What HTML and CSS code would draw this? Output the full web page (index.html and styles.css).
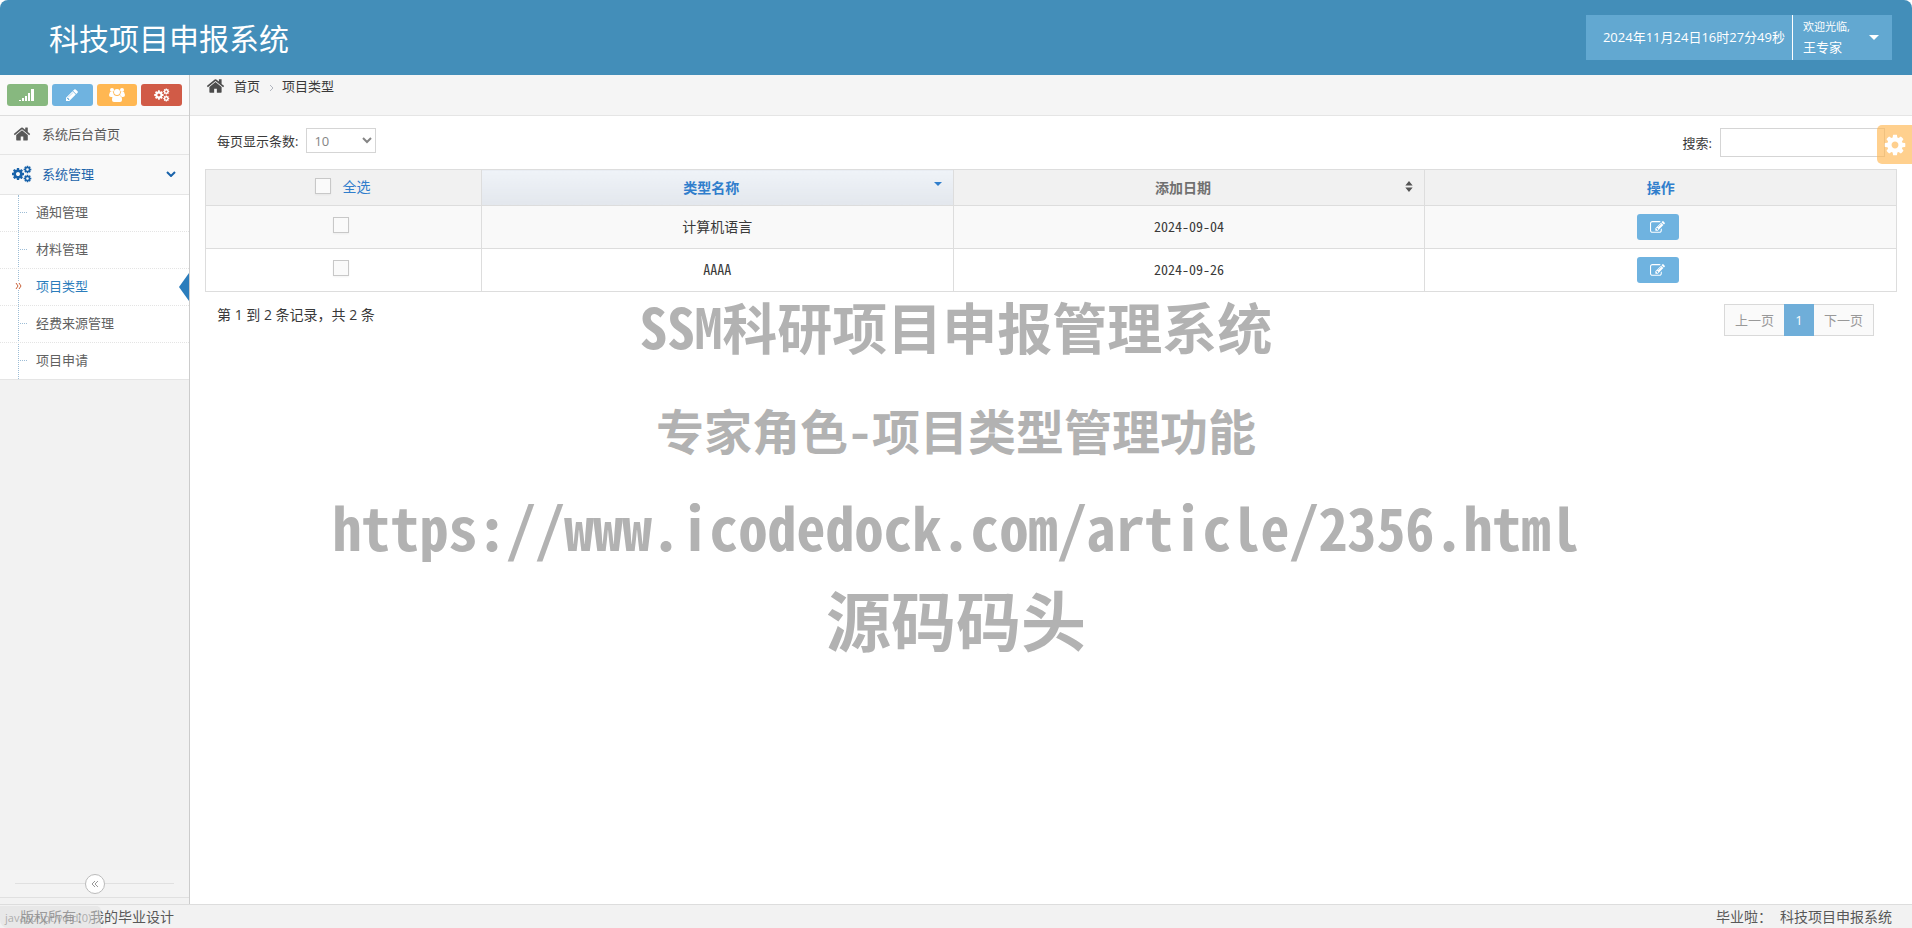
FILE: index.html
```html
<!DOCTYPE html>
<html lang="zh-CN">
<head>
<meta charset="utf-8">
<title>科技项目申报系统</title>
<link rel="stylesheet" href="styles.css">
</head>
<body>
<svg class="defs" aria-hidden="true">
  <symbol id="home" viewBox="0 0 1792 1792"><path d="M1472 992v480q0 26-19 45t-45 19h-384v-384h-256v384h-384q-26 0-45-19t-19-45v-480q0-1 .5-3t.5-3l575-474 575 474q1 2 1 6zm223-69l-62 74q-8 9-21 11h-3q-13 0-21-7l-692-577-692 577q-12 8-24 7-13-2-21-11l-62-74q-8-10-7-23.500t11-21.500l719-599q32-26 76-26t76 26l244 204v-195q0-14 9-23t23-9h192q14 0 23 9t9 23v408l219 182q10 8 11 21.500t-7 23.500z"/></symbol>
  <symbol id="cog" viewBox="0 0 1792 1792"><path d="M1152 896q0-106-75-181t-181-75-181 75-75 181 75 181 181 75 181-75 75-181zm512-109v222q0 12-8 23t-20 13l-185 28q-19 54-39 91 35 50 107 138 10 12 10 25t-9 23q-27 37-99 108t-94 71q-12 0-26-9l-138-108q-44 23-91 38-16 136-29 186-7 28-36 28h-222q-14 0-24.500-8.500t-11.500-21.500l-28-184q-49-16-90-37l-141 107q-10 9-25 9-14 0-25-11-126-114-165-168-7-10-7-23 0-12 8-23 15-21 51-66.500t54-70.500q-27-50-41-99l-183-27q-13-2-21-12.500t-8-23.500v-222q0-12 8-23t19-13l186-28q14-46 39-92-40-57-107-138-10-12-10-24 0-10 9-23 26-36 98.500-107.500t94.500-71.500q13 0 26 10l138 107q44-23 91-38 16-136 29-186 7-28 36-28h222q14 0 24.500 8.500t11.500 21.500l28 184q49 16 90 37l142-107q9-9 24-9 13 0 25 10 129 119 165 170 7 8 7 22 0 12-8 23-15 21-51 66.500t-54 70.500q26 50 41 98l183 28q13 2 21 12.500t8 23.500z"/></symbol>
  <symbol id="cogs" viewBox="0 0 20 18"><use href="#cog" x="-1" y="2" width="14" height="14"/><use href="#cog" x="11" y="0" width="9" height="9"/><use href="#cog" x="11" y="9" width="9" height="9"/></symbol>
  <symbol id="pencil" viewBox="0 0 1792 1792"><path d="M491 1536l91-91-235-235-91 91v107h128v128h107zm523-928q0-22-22-22-10 0-17 7l-542 542q-7 7-7 17 0 22 22 22 10 0 17-7l542-542q7-7 7-17zm-54-192l416 416-832 832h-416v-416zm683 96q0 53-37 90l-166 166-416-416 166-165q36-38 90-38 53 0 91 38l235 234q37 39 37 91z"/></symbol>
  <symbol id="edit" viewBox="0 0 1792 1792"><path d="M888 1184l116-116-152-152-116 116v56h96v96h56zm440-720q-16-16-33 1l-350 350q-17 17-1 33t33-1l350-350q17-17 1-33zm80 594v190q0 119-84.500 203.500t-203.500 84.500h-832q-119 0-203.500-84.500t-84.500-203.500v-832q0-119 84.500-203.500t203.500-84.500h832q63 0 117 25 15 7 18 23 3 17-9 29l-49 49q-14 14-32 8-23-6-45-6h-832q-66 0-113 47t-47 113v832q0 66 47 113t113 47h832q66 0 113-47t47-113v-126q0-13 9-22l64-64q15-15 35-7t20 29zm-96-738l288 288-672 672h-288v-288zm444 132l-92 92-288-288 92-92q28-28 68-28t68 28l152 152q28 28 28 68t-28 68z"/></symbol>
  <symbol id="signal" viewBox="0 0 16 14"><path d="M0 12h2v1H0zM3 10h2v3H3zM6 8h2v5H6zM9 5h2v8H9zM12 1h3v12h-3z"/></symbol>
  <symbol id="users" viewBox="0 0 16 14"><circle cx="3" cy="2" r="2"/><circle cx="13" cy="2" r="2"/><circle cx="8" cy="4" r="3"/><path d="M1 4h3l1 3-1 2H2Q0 9 0 7zM15 4h-3l-1 3 1 2h2q2 0 2-2zM5 7q3 2 6 0 2 1 2 5 0 2-2 2H5q-2 0-2-2 0-4 2-5z"/></symbol>
  <symbol id="sort" viewBox="0 0 8 12"><path d="M0 5l4-5 4 5zM0 7h8l-4 5z"/></symbol>
</svg>

<header class="navbar">
  <h1 class="brand">科技项目申报系统</h1>
  <div class="account">
    <time class="clock">2024年11月24日16时27分49秒</time>
    <button class="user" type="button">
      <span class="user-text"><small class="welcome">欢迎光临,</small><span>王专家</span></span>
      <span class="caret"></span>
    </button>
  </div>
</header>

<div class="body">
  <aside class="sidebar">
    <div class="shortcuts">
      <button class="shortcut green" type="button" aria-label="统计"><svg class="ic-short"><use href="#signal"/></svg></button>
      <button class="shortcut blue" type="button" aria-label="编辑"><svg class="ic-short"><use href="#pencil"/></svg></button>
      <button class="shortcut orange" type="button" aria-label="用户"><svg class="ic-short"><use href="#users"/></svg></button>
      <button class="shortcut red" type="button" aria-label="设置"><svg class="ic-short"><use href="#cogs"/></svg></button>
    </div>
    <nav class="menu">
      <a class="item" href="#"><svg class="ic-menu"><use href="#home"/></svg>系统后台首页</a>
      <a class="item open" href="#"><svg class="ic-menu"><use href="#cogs"/></svg>系统管理
        <svg class="chev" viewBox="0 0 10 6"><path d="M1 1l4 4 4-4"/></svg></a>
      <div class="submenu">
        <a class="sub" href="#">通知管理</a>
        <a class="sub" href="#">材料管理</a>
        <a class="sub active" href="#"><svg class="mark" viewBox="0 0 7 8"><path d="M1 1l2 3-2 3M4 1l2 3-2 3"/></svg>项目类型</a>
        <a class="sub" href="#">经费来源管理</a>
        <a class="sub" href="#">项目申请</a>
      </div>
    </nav>
    <div class="collapse">
      <button class="collapse-btn" type="button" aria-label="收起"><svg class="ic-collapse" viewBox="0 0 8 8"><path d="M4 1L1 4l3 3M7 1L4 4l3 3"/></svg></button>
    </div>
  </aside>

  <main class="main">
    <nav class="crumbs">
      <svg class="ic-crumb"><use href="#home"/></svg>
      <a class="crumb" href="#">首页</a>
      <svg class="sep" viewBox="0 0 5 8"><path d="M1 1l3 3-3 3"/></svg>
      <span>项目类型</span>
    </nav>
    <div class="content">
      <div class="tools">
        <label class="tool">每页显示条数:
          <select class="length"><option>10</option><option>25</option></select></label>
        <label class="tool">搜索: <input class="search" type="text"></label>
      </div>
      <table class="grid">
        <thead>
          <tr>
            <th class="pick"><label class="all"><input class="check" type="checkbox">全选</label></th>
            <th class="sortable sorted">类型名称<span class="sort-down"></span></th>
            <th class="sortable plain">添加日期<svg class="sort-both"><use href="#sort"/></svg></th>
            <th>操作</th>
          </tr>
        </thead>
        <tbody>
          <tr>
            <td class="control"><input class="check" type="checkbox" aria-label="选择"></td>
            <td>计算机语言</td>
            <td>2024-09-04</td>
            <td class="control"><button class="edit" type="button" aria-label="编辑"><svg class="ic-edit"><use href="#edit"/></svg></button></td>
          </tr>
          <tr>
            <td class="control"><input class="check" type="checkbox" aria-label="选择"></td>
            <td>AAAA</td>
            <td>2024-09-26</td>
            <td class="control"><button class="edit" type="button" aria-label="编辑"><svg class="ic-edit"><use href="#edit"/></svg></button></td>
          </tr>
        </tbody>
      </table>
      <div class="foot">
        <span>第 1 到 2 条记录，共 2 条</span>
        <div class="pages">
          <button class="page" type="button">上一页</button>
          <button class="page current" type="button">1</button>
          <button class="page" type="button">下一页</button>
        </div>
      </div>
    </div>
    <button class="settings" type="button" aria-label="设置"><svg class="ic-settings"><use href="#cog"/></svg></button>
  </main>
</div>

<footer class="footer">
  <span>版权所有：我的毕业设计</span>
  <span class="credit"><span>毕业啦：</span><span>科技项目申报系统</span></span>
  <div class="status">javascript:void(0)</div>
</footer>

<div class="watermark">
  <p class="wm wm-name">SSM科研项目申报管理系统</p>
  <p class="wm wm-role">专家角色-项目类型管理功能</p>
  <p class="wm wm-url">https://www.icodedock.com/article/2356.html</p>
  <p class="wm wm-site">源码码头</p>
</div>
</body>
</html>
```
FILE: styles.css
```css
* { box-sizing: border-box; }
body {
  margin: 0;
  min-height: 100vh;
  display: flex;
  flex-direction: column;
  position: relative;
  background: #fff;
  color: #393939;
  font: 13px/20px "Open Sans", "Noto Sans CJK SC", sans-serif;
}
a { color: inherit; text-decoration: none; }
button, input, select { font: inherit; margin: 0; }
button { border: 0; padding: 0; cursor: pointer; }
svg { fill: currentColor; flex: none; }
.defs { position: absolute; width: 0; height: 0; }

.navbar {
  display: flex;
  justify-content: space-between;
  align-items: center;
  height: 75px;
  padding: 0 20px 0 49px;
  background: #438eb9;
  border-radius: 8px 8px 0 0;
  color: #fff;
}
.brand { margin: 0; padding-top: 2px; font-size: 30px; line-height: 40px; font-weight: 400; }
.account { display: flex; height: 45px; background: #62a8d1; }
.clock { padding: 0 7px 0 17px; line-height: 45px; border-right: 1px solid #fff; }
.user {
  display: flex;
  align-items: center;
  justify-content: space-between;
  width: 99px;
  padding: 0 13px 0 10px;
  background: none;
  color: #fff;
  text-align: left;
}
.user-text { display: flex; flex-direction: column; padding-bottom: 2px; }
.welcome { font-size: 11px; }
.caret { border: 5px solid transparent; border-top-color: #fff; border-bottom: 0; }

.body { display: flex; flex: 1; }
.sidebar {
  display: flex;
  flex-direction: column;
  width: 190px;
  flex: none;
  background: #f2f2f2;
  border-right: 1px solid #ccc;
}
.shortcuts {
  display: flex;
  gap: 4px;
  padding: 9px 7px;
  height: 41px;
  background: #fafafa;
  border-bottom: 1px solid #ddd;
}
.shortcut {
  display: flex;
  flex: 1;
  align-items: center;
  justify-content: center;
  height: 22px;
  border-radius: 3px;
  color: #fff;
}
.green { background: #87b87f; }
.blue { background: #6fb3e0; }
.orange { background: #ffb752; }
.red { background: #d15b47; }
.ic-short { width: 16px; height: 14px; }
.item {
  display: flex;
  align-items: center;
  height: 39px;
  padding: 0 13px 2px 12px;
  gap: 10px;
  background: #f9f9f9;
  border-bottom: 1px solid #e5e5e5;
  color: #585858;
}
.open { height: 40px; color: #1963aa; }
.ic-menu { width: 20px; height: 18px; }
.chev { width: 10px; height: 6px; margin-left: auto; fill: none; stroke: currentColor; stroke-width: 2; }
.submenu { position: relative; background: #fff; border-bottom: 1px solid #e5e5e5; }
.submenu::before {
  content: "";
  position: absolute;
  left: 18px;
  top: 0;
  bottom: 0;
  border-left: 1px dotted #9dbdd6;
}
.sub {
  display: block;
  position: relative;
  padding: 7px 0 9px 36px;
  border-top: 1px dotted #e4e4e4;
  color: #616161;
}
.sub:first-child { border-top: 0; }
.sub::before {
  content: "";
  position: absolute;
  left: 20px;
  top: 17px;
  width: 7px;
  border-top: 1px dotted #9dbdd6;
}
.active { color: #2b7dbc; }
.active::before { display: none; }
.active::after {
  content: "";
  position: absolute;
  right: 0;
  top: 4px;
  border: 14px solid transparent;
  border-width: 14px 10px 14px 0;
  border-right-color: #2b7dbc;
}
.mark {
  position: absolute;
  left: 15px;
  top: 13px;
  width: 7px;
  height: 8px;
  fill: none;
  stroke: #c86139;
  background: #fff;
}
.collapse {
  display: flex;
  align-items: center;
  justify-content: center;
  height: 28px;
  margin-top: auto;
  margin-bottom: 6px;
  padding: 0 15px;
  background: #f3f3f3;
  border-bottom: 1px solid #e0e0e0;
}
.collapse::before, .collapse::after { content: ""; flex: 1; border-top: 1px solid #e0e0e0; }
.collapse-btn {
  display: flex;
  align-items: center;
  justify-content: center;
  width: 20px;
  height: 20px;
  border: 1px solid #bbb;
  border-radius: 50%;
  background: #fff;
  color: #999;
}
.ic-collapse { width: 8px; height: 8px; fill: none; stroke: currentColor; }

.main { flex: 1; min-width: 0; position: relative; }
.crumbs {
  display: flex;
  align-items: flex-start;
  height: 41px;
  padding: 1px 16px;
  background: #f5f5f5;
  border-bottom: 1px solid #e5e5e5;
}
.ic-crumb { width: 19px; height: 20px; margin-right: 9px; color: #4c4c4c; }
.sep { width: 5px; height: 8px; margin: 8px 8px 0 9px; fill: none; stroke: #b2b6bf; }
.content { padding: 0 15px; }
.tools {
  display: flex;
  justify-content: space-between;
  align-items: flex-start;
  height: 53px;
  padding: 12px 12px 0;
}
.tool { display: flex; align-items: center; gap: 8px; }
.length {
  width: 70px;
  height: 25px;
  padding: 0 3px;
  border: 1px solid #d5d5d5;
  border-radius: 0;
  background: #fff;
  color: #858585;
}
.search { width: 165px; height: 29px; border: 1px solid #d5d5d5; }
.grid {
  width: 100%;
  table-layout: fixed;
  border-collapse: collapse;
  font-family: "Noto Sans Mono CJK SC", "Noto Sans CJK SC", monospace;
  font-size: 14px;
  text-align: center;
}
.grid th, .grid td { border: 1px solid #ddd; padding: 0 0 2px; vertical-align: middle; }
.grid th { position: relative; height: 36px; background: #f1f1f1; color: #307ecc; font-size: 14px; }
.grid td { height: 43px; font-size: 14px; }
.grid .sortable { padding-right: 12px; }
.grid .control { padding: 0 6px 0 0; }
.grid tbody tr:first-child { background: #f9f9f9; }
.grid .pick { width: 276px; padding-right: 2px; font-weight: 400; }
.grid .sorted { background: linear-gradient(#eff3f8, #e3e7ed); }
.grid .plain { color: #707070; }
.all { display: inline-flex; align-items: center; gap: 12px; }
.sort-down {
  position: absolute;
  right: 11px;
  top: 12px;
  border: 4px solid transparent;
  border-top-color: #307ecc;
  border-bottom: 0;
}
.sort-both { position: absolute; right: 11px; top: 11px; width: 8px; height: 11px; color: #555; }
.check {
  appearance: none;
  display: inline-block;
  vertical-align: top;
  width: 16px;
  height: 16px;
  border: 1px solid #c8c8c8;
  background: #fafafa;
  box-shadow: 0 1px 2px rgba(0, 0, 0, .05);
}
.edit {
  display: inline-flex;
  align-items: center;
  justify-content: center;
  vertical-align: middle;
  width: 42px;
  height: 26px;
  border-radius: 3px;
  background: #6fb3e0;
  color: #fff;
}
.ic-edit { width: 15px; height: 15px; }
.foot {
  display: flex;
  justify-content: space-between;
  align-items: flex-start;
  padding: 12px 23px 0 12px;
  font-size: 14px;
  line-height: 22px;
}
.pages { display: flex; }
.page {
  height: 32px;
  padding: 0 10px;
  border: 1px solid #d9d9d9;
  background: #fafafa;
  color: #999;
  font-size: 13px;
}
.page.current { width: 30px; background: #6faed9; border-color: #6faed9; color: #fff; }
.page:first-child { border-right: 0; }
.page:last-child { border-left: 0; }
.settings {
  position: absolute;
  right: 0;
  top: 50px;
  display: flex;
  align-items: center;
  justify-content: center;
  width: 35px;
  height: 39px;
  border-radius: 5px 0 0 5px;
  background: #ffb752;
  color: #fff;
  opacity: .65;
}
.ic-settings { width: 24px; height: 24px; }

.footer {
  display: flex;
  position: relative;
  justify-content: space-between;
  height: 24px;
  padding: 0 20px;
  border-top: 1px solid #ddd;
  background: #f2f2f2;
  color: #585858;
  font: 14px/22px "Noto Sans CJK SC", sans-serif;
}
.credit { display: flex; gap: 8px; }
.status {
  position: absolute;
  left: 0;
  bottom: 0;
  width: 101px;
  height: 22px;
  padding-left: 5px;
  border-radius: 0 5px 0 8px;
  background: rgba(222, 222, 222, .5);
  color: rgba(130, 130, 130, .6);
  font: 11px/24px "Open Sans", sans-serif;
}

.watermark {
  position: absolute;
  left: 0;
  right: 0;
  top: 277px;
  color: #b2b2b2;
  font-family: "Noto Sans Mono CJK SC", "Noto Sans CJK SC", monospace;
  font-weight: 700;
  text-align: center;
  white-space: nowrap;
  pointer-events: none;
}
.wm { margin: 0; }
.wm-name { font-size: 55px; line-height: 96px; }
.wm-role { font-size: 48px; line-height: 112px; }
.wm-url { font-size: 58px; line-height: 82px; }
.wm-site { font-size: 65px; line-height: 102px; }
```
